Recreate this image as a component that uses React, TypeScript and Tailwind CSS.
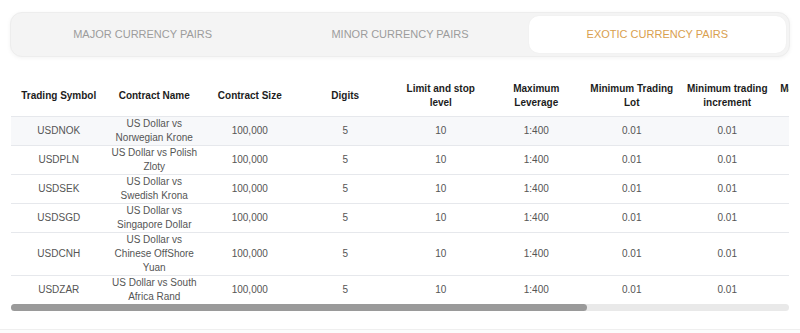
import React from "react";

const headers = [
  "Trading Symbol",
  "Contract Name",
  "Contract Size",
  "Digits",
  "Limit and stop level",
  "Maximum Leverage",
  "Minimum Trading Lot",
  "Minimum trading increment",
  "Maximum Trading Lot",
  "Swap Long",
  "Swap Short",
];

const rows = [
  ["USDNOK", "US Dollar vs Norwegian Krone"],
  ["USDPLN", "US Dollar vs Polish Zloty"],
  ["USDSEK", "US Dollar vs Swedish Krona"],
  ["USDSGD", "US Dollar vs Singapore Dollar"],
  ["USDCNH", "US Dollar vs Chinese OffShore Yuan"],
  ["USDZAR", "US Dollar vs South Africa Rand"],
];

export default function App() {
  return (
    <div className="w-[800px] h-[333px] overflow-hidden bg-white pt-[12px] font-['Liberation_Sans',Arial,sans-serif]">
      <div className="mx-[10px] h-[45px] rounded-[12px] bg-[#f4f4f4] p-[3px] flex border border-[#ededed] shadow-[0_1px_4px_rgba(0,0,0,0.05)]">
        <div className="flex-1 flex items-center justify-center text-[11px] text-[#9c9c9c]">
          MAJOR CURRENCY PAIRS
        </div>
        <div className="flex-1 flex items-center justify-center text-[11px] text-[#9c9c9c]">
          MINOR CURRENCY PAIRS
        </div>
        <div className="flex-1 flex items-center justify-center text-[11px] text-[#d9a04e] bg-white rounded-[10px] shadow-[0_0_2px_rgba(0,0,0,0.04)]">
          EXOTIC CURRENCY PAIRS
        </div>
      </div>

      <div className="mx-[11px] mt-[20px]">
        <div className="overflow-hidden">
          <table className="w-[1050.5px] table-fixed border-collapse text-[10px]">
            <thead>
              <tr className="border-b border-[#e6e8ec]">
                {headers.map((h) => (
                  <th
                    key={h}
                    className="w-[95.5px] h-[39px] px-[5px] py-0 text-center align-middle font-bold text-[#1c1c1c] leading-[14px]"
                  >
                    {h}
                  </th>
                ))}
              </tr>
            </thead>
            <tbody>
              {rows.map(([sym, name], i) => (
                <tr
                  key={sym}
                  className={
                    (i > 0 ? "border-t border-[#e6e8ec] " : "") +
                    (i === 0 ? "bg-[#f7f8fa]" : "bg-white")
                  }
                >
                  {[sym, name, "100,000", "5", "10", "1:400", "0.01", "0.01", "50", "-", "-"].map(
                    (v, j) => (
                      <td
                        key={j}
                        className="h-[29px] px-[4px] py-0 text-center align-middle text-[#555] leading-[14px]"
                      >
                        {v}
                      </td>
                    )
                  )}
                </tr>
              ))}
            </tbody>
          </table>
        </div>
        <div className="h-[7px] rounded-full bg-[#e9e9e9] flex">
          <div className="w-[576px] h-full rounded-full bg-[#9a9a9a]" />
        </div>
      </div>

      <div className="mt-[18px] h-[10px] border-t border-[#efefef] bg-[#fcfcfc]" />
    </div>
  );
}
